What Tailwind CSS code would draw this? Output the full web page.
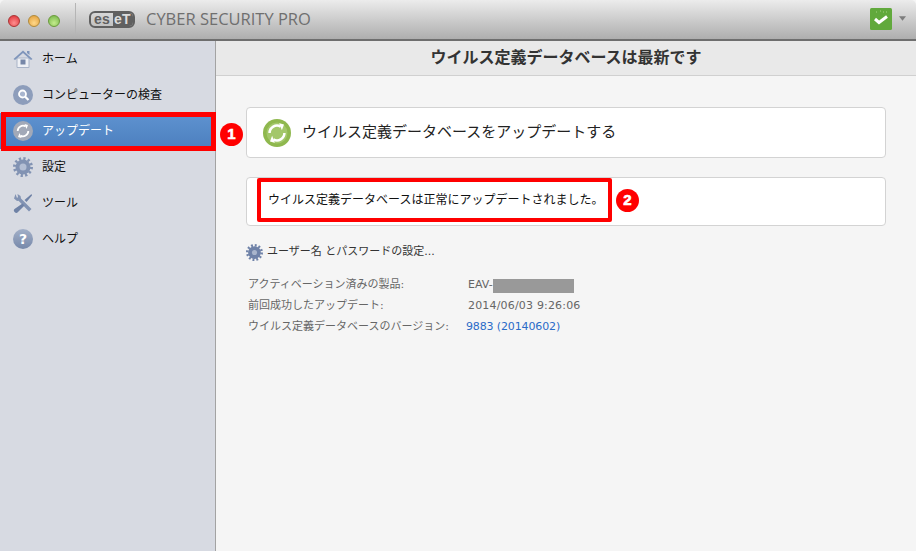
<!DOCTYPE html>
<html lang="ja">
<head>
<meta charset="utf-8">
<script src="https://cdn.jsdelivr.net/npm/@tailwindcss/browser@4"></script>
</head>
<body class="m-0 bg-[#f5f5f5]">
<div class="relative w-[916px] h-[551px] overflow-hidden flex flex-col font-['Lucida_Grande','DejaVu_Sans','Noto_Sans_CJK_JP',sans-serif] bg-[#f5f5f5]">
  <!-- title bar -->
  <header class="h-[41px] shrink-0 flex items-center bg-gradient-to-b from-[#ececec] to-[#aeaeae] border-b-2 border-[#6e6e6e] rounded-t-[5px]">
    <div class="flex items-center gap-[8px] pl-[8px] w-[75px] shrink-0 mt-[3px]">
      <span class="w-[12px] h-[12px] rounded-full border border-[#a33] bg-[radial-gradient(circle_at_50%_70%,#ff8f8f,#dc2c33)]"></span>
      <span class="w-[12px] h-[12px] rounded-full border border-[#b08a3a] bg-[radial-gradient(circle_at_50%_70%,#ffd889,#e09a35)]"></span>
      <span class="w-[12px] h-[12px] rounded-full border border-[#6a9a3a] bg-[radial-gradient(circle_at_50%_70%,#c4ec8c,#70b245)]"></span>
    </div>
    <div class="w-px h-[32px] bg-[#b5b5b5] mb-[2px]"></div>
    <div class="ml-[13px] w-[46px] h-[17px] mb-[1px] rounded-[6px] border-2 border-[#606060] flex items-center overflow-hidden font-['Liberation_Sans',sans-serif] font-bold text-[14px] leading-none tracking-[0.3px]">
      <span class="pl-[3px] w-[22px] text-[#606060]">es</span>
      <span class="flex-1 h-full bg-[#606060] text-[#dcdcdc] flex items-center pl-[1px]">eT</span>
    </div>
    <span class="ml-[11px] mb-[1px] text-[16.500px] leading-none text-[#6f6f6f] font-['Open_Sans',sans-serif]">CYBER SECURITY PRO</span>
    <div class="ml-auto flex items-center pr-[10px] gap-[7px] mb-[2px]">
      <svg class="w-[22px] h-[22px]" viewBox="0 0 22 22"><rect width="22" height="22" rx="1.500" fill="#61a93c"/><path d="M5 11l4 3.500 8-6" fill="none" stroke="#fff" stroke-width="3"/><path d="M6 4h1M10 3h1M13 4h1M16 4h1" stroke="#a5d083" stroke-width="1"/></svg>
      <svg class="w-[7px] h-[5px]" viewBox="0 0 8 5"><path d="M0 0h8L4 5z" fill="#7d7d7d"/></svg>
    </div>
  </header>

  <div class="flex flex-1 min-h-0">
    <!-- sidebar -->
    <nav class="w-[216px] shrink-0 bg-[#d7dae2] border-r border-[#a3a3a3] flex flex-col text-[12px] text-[#111]">
      <a class="h-[36px] flex items-center pl-[13px] gap-[9px]">
        <svg class="w-[20px] h-[20px]" viewBox="0 0 20 20"><path d="M4 9v9.500h12V9z" fill="#eef0f5" stroke="#a9b4c8"/><path d="M0.500 10L10 1.500l9.500 8.500-1.500 1L10 4 2 11z" fill="#7f95bb"/><path d="M14 2h2.500v4L14 4z" fill="#7f95bb"/><rect x="7.500" y="10.500" width="5" height="5" fill="#7787a8"/></svg>
        <span>ホーム</span>
      </a>
      <a class="h-[36px] flex items-center pl-[13px] gap-[9px]">
        <svg class="w-[20px] h-[20px]" viewBox="0 0 20 20"><circle cx="10" cy="10" r="10" fill="#8d9dbb"/><circle cx="9.500" cy="9" r="3.500" fill="#a9b6cf" stroke="#fff" stroke-width="1.800"/><path d="M12 11.500l3.500 3.500" stroke="#fff" stroke-width="2.200"/></svg>
        <span>コンピューターの検査</span>
      </a>
      <a class="h-[36px] flex items-center pl-[13px] gap-[9px] text-white bg-gradient-to-b from-[#5f93d0] to-[#4c7fbe]">
        <svg class="w-[20px] h-[20px]" viewBox="0 0 20 20"><circle cx="10" cy="10" r="10" fill="#a2a9b8"/><g fill="none" stroke="#fff" stroke-width="1.800"><path d="M4.700 10A5.300 5.300 0 0 1 12.600 5.400"/><path d="M15.300 10A5.300 5.300 0 0 1 7.400 14.600"/></g><path d="M11.500 3l3.500 1-1.500 4zM8.500 17L5 16l1.500-4z" fill="#fff"/></svg>
        <span>アップデート</span>
      </a>
      <a class="h-[36px] flex items-center pl-[13px] gap-[9px]">
        <svg class="w-[20px] h-[20px]" viewBox="0 0 20 20"><circle cx="10" cy="10" r="7.500" fill="#8293b3"/><circle cx="10" cy="10" r="8.500" fill="none" stroke="#8293b3" stroke-width="3" stroke-dasharray="2.230 2.230"/><circle cx="10" cy="10" r="3.500" fill="#b4bfd4"/></svg>
        <span>設定</span>
      </a>
      <a class="h-[36px] flex items-center pl-[13px] gap-[9px]">
        <svg class="w-[20px] h-[20px]" viewBox="0 0 20 20"><path d="M2.500 1L1 5.500 4 8l1.500-.200L16 18.500l2.500-2.500L8 5.500 7.500 3 4.500 1 5 4 4 5z" fill="#8293b3"/><path d="M18.500 1l.500 1.500-5.500 6.500-2-2zM9.500 10.500l2 2L5 19a2 2 0 0 1-3.500-3z" fill="#6f82a6"/></svg>
        <span>ツール</span>
      </a>
      <a class="h-[36px] flex items-center pl-[13px] gap-[9px]">
        <span class="w-[20px] h-[20px] rounded-full bg-gradient-to-b from-[#a3b0c8] to-[#7688aa] flex items-center justify-center text-white font-bold text-[14px] leading-none">?</span>
        <span>ヘルプ</span>
      </a>
    </nav>

    <!-- main -->
    <main class="flex-1 min-w-0 flex flex-col">
      <h1 class="h-[35px] shrink-0 flex items-center justify-center bg-[#e9e9e9] border-b border-[#d0d0d0] text-[16px] font-bold text-[#333]">ウイルス定義データベースは最新です</h1>
      <div class="pl-[30px] pr-[30px] pt-[31px] flex flex-col">
        <div class="h-[51px] flex items-center pl-[16px] gap-[11px] bg-white border border-[#d3d3d3] rounded-[4px]">
          <svg class="w-[28px] h-[28px]" viewBox="0 0 20 20"><circle cx="10" cy="10" r="10" fill="#8fb84e"/><circle cx="10" cy="10" r="7.500" fill="#a3c76a"/><g fill="none" stroke="#fff" stroke-width="1.800"><path d="M4.700 10A5.300 5.300 0 0 1 12.600 5.400"/><path d="M15.300 10A5.300 5.300 0 0 1 7.400 14.600"/></g><path d="M11.500 3l3.500 1-1.500 4zM8.500 17L5 16l1.500-4z" fill="#fff"/></svg>
          <span class="text-[15px] text-[#222]">ウイルス定義データベースをアップデートする</span>
        </div>
        <div class="h-[49px] mt-[19px] flex items-center pl-[21px] bg-white border border-[#d3d3d3] rounded-[4px]">
          <span class="text-[12px] text-[#111] mt-[-3px]">ウイルス定義データベースは正常にアップデートされました。</span>
        </div>
        <div class="mt-[18px] flex items-center gap-[4px] text-[11px] text-[#333]">
          <svg class="w-[17px] h-[17px]" viewBox="0 0 20 20"><circle cx="10" cy="10" r="7.500" fill="#6f82a8"/><circle cx="10" cy="10" r="8.500" fill="none" stroke="#6f82a8" stroke-width="3" stroke-dasharray="2.230 2.230"/><circle cx="10" cy="10" r="3" fill="#a9b5cc"/></svg>
          <span>ユーザー名 とパスワードの設定...</span>
        </div>
        <dl class="mt-[14px] pl-[2px] grid grid-cols-[220px_1fr] auto-rows-[21px] items-center text-[11px] text-[#666]">
          <dt>アクティベーション済みの製品:</dt>
          <dd class="flex items-center"><span>EAV-</span><span class="w-[81px] h-[14px] bg-[#999]"></span></dd>
          <dt>前回成功したアップデート:</dt>
          <dd class="tracking-[0.18px]">2014/06/03 9:26:06</dd>
          <dt>ウイルス定義データベースのバージョン:</dt>
          <dd class="ml-[-2px] tracking-[-0.13px] text-[#2a6bc8]">9883 (20140602)</dd>
        </dl>
      </div>
    </main>
  </div>

  <!-- annotations -->
  <div class="absolute left-[1px] top-[112px] w-[215px] h-[39px] border-[5px] border-[#f00]"></div>
  <div class="absolute left-[257px] top-[178px] w-[355px] h-[44px] border-[4px] border-[#f00] rounded-[2px]"></div>
  <div class="absolute left-[220px] top-[123px] w-[23px] h-[23px] rounded-full bg-[#f00] text-white font-bold text-[15px] [-webkit-text-stroke:0.6px_white] flex items-center justify-center font-['Liberation_Sans',sans-serif]">1</div>
  <div class="absolute left-[616px] top-[189px] w-[23px] h-[23px] rounded-full bg-[#f00] text-white font-bold text-[15px] [-webkit-text-stroke:0.6px_white] flex items-center justify-center font-['Liberation_Sans',sans-serif]">2</div>
</div>
</body>
</html>
